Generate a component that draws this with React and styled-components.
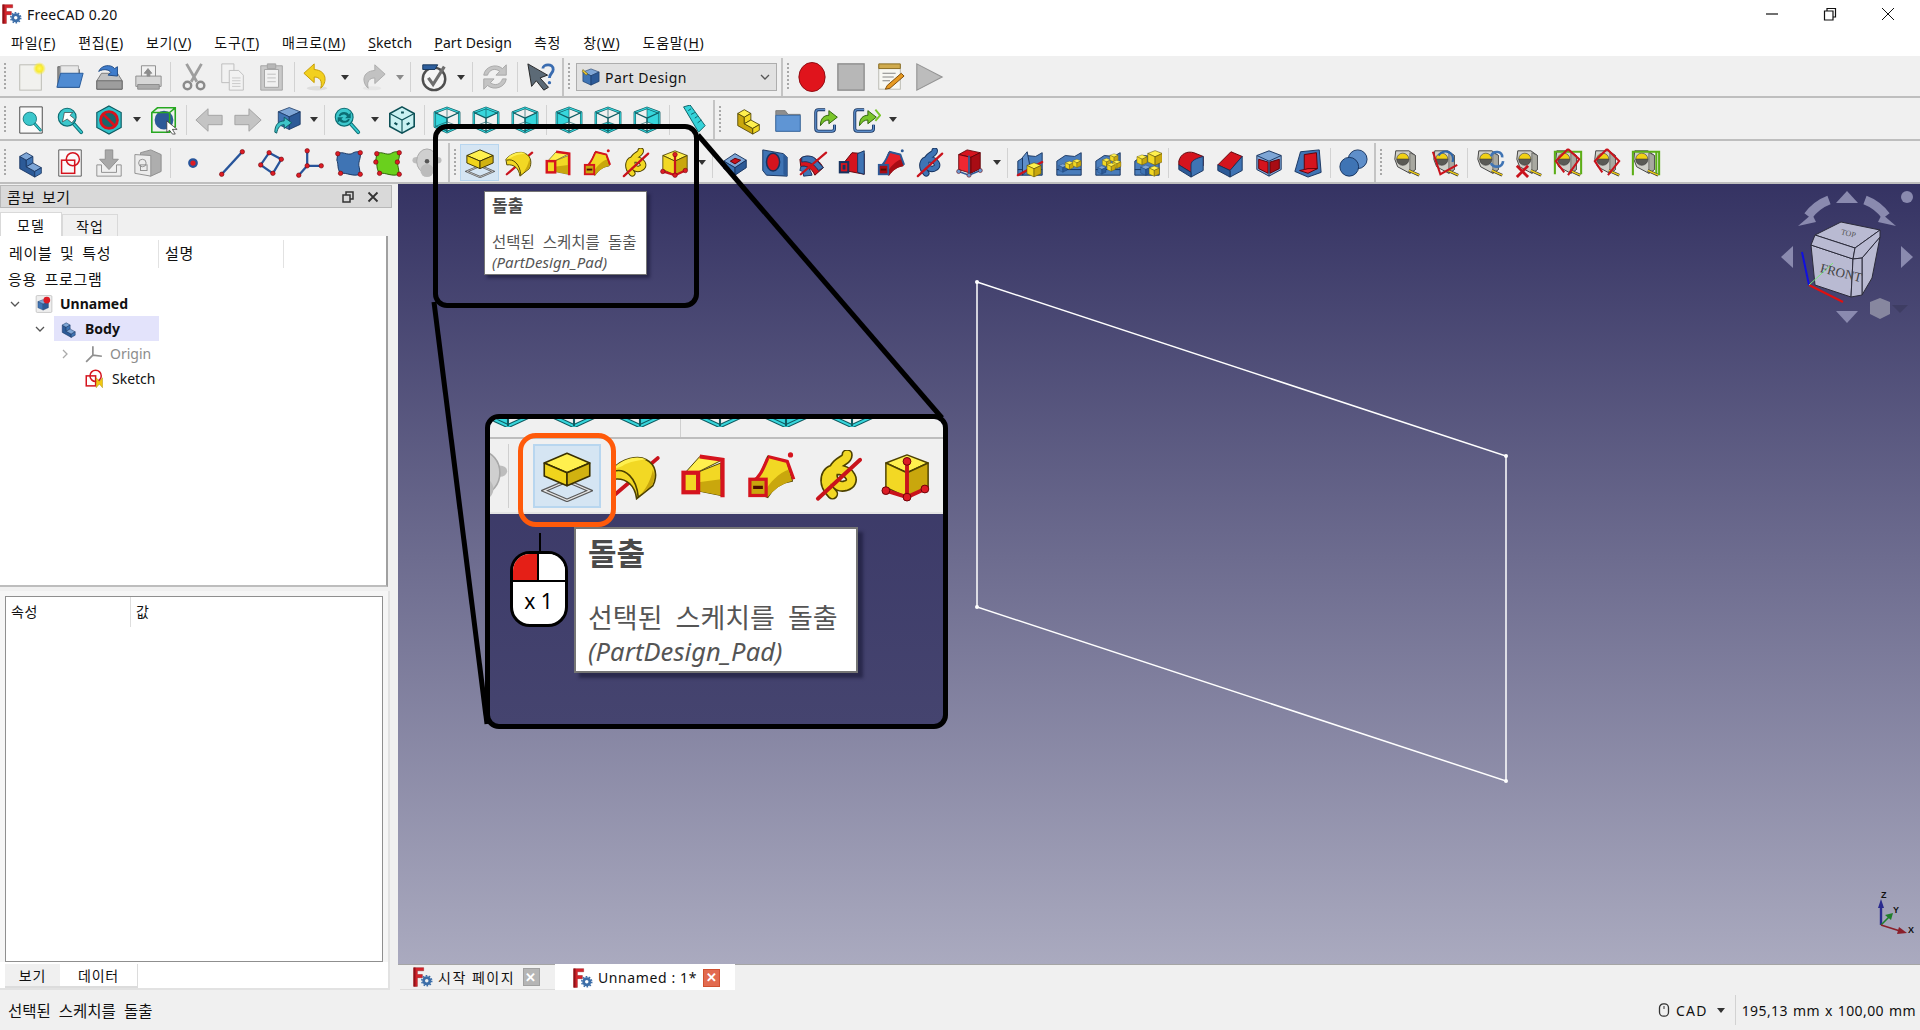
import React from 'react';
import styled, {createGlobalStyle} from 'styled-components';

const FONT = `"Noto Sans", "Noto Sans CJK KR", sans-serif`;

const GlobalStyle = createGlobalStyle`
    html, body {
        margin: 0;
        padding: 0;
        height: 100%;
        overflow: hidden;
        background: #f0f0f0;
    }
    * {
        box-sizing: border-box;
    }
`;

const Page = styled.div`
    position: relative;
    display: flex;
    flex-direction: column;
    width: 1920px;
    height: 1030px;
    overflow: hidden;
    background: #f0f0f0;
    color: #111;
    font-family: ${FONT};
    font-size: 14px;
`;

/* title + menu */
const TitleBar = styled.div`
    display: flex;
    align-items: center;
    flex: none;
    height: 28px;
    padding: 0 3px 0 2px;
    background: #fff;
    font-size: 14px;
    letter-spacing: 0.2px;
`;
const TitleText = styled.span`
    flex: 1;
    margin-left: 5px;
`;
const WinBtn = styled.div`
    display: flex;
    align-items: center;
    justify-content: center;
    width: 58px;
    height: 28px;
`;
const MenuBar = styled.div`
    display: flex;
    align-items: center;
    flex: none;
    height: 28px;
    padding-left: 11px;
    gap: 22px;
    background: #fff;
    font-size: 14px;
`;
const MenuItem = styled.span`
    letter-spacing: ${p => (p.$latin ? 0.1 : 0.75)}px;
    u {
        text-underline-offset: 2px;
    }
`;

/* toolbars */
const ToolRow = styled.div`
    display: flex;
    align-items: center;
    flex: none;
    height: ${p => p.$h || 42}px;
    padding: 2px 0 0 4px;
    background: #f0f0f0;
    border-bottom: 2px solid #bebebe;
`;
const Handle = styled.div`
    flex: none;
    width: 2px;
    height: 28px;
    margin-right: ${p => p.$after || 5.5}px;
    background: repeating-linear-gradient(to bottom, #a8a8a8 0 2px, transparent 2px 4px);
`;
const ToolBreak = styled.div`
    display: flex;
    align-items: center;
    flex: none;
    height: 100%;
    margin-left: 2px;
    padding-left: 4px;
    border-left: 2px solid #c4c4c4;
`;
const ToolBtn = styled.div`
    display: flex;
    align-items: center;
    justify-content: center;
    flex: none;
    width: 39px;
    height: 37px;
    background: ${p => (p.$active ? '#d5e5f3' : 'transparent')};
    border: 1px solid ${p => (p.$active ? '#b8d6ef' : 'transparent')};
`;
const Drop = styled.div`
    flex: none;
    width: 16px;
    height: 5px;
    display: flex;
    justify-content: center;
    &::after {
        content: '';
        border-left: 4px solid transparent;
        border-right: 4px solid transparent;
        border-top: 5px solid ${p => p.$color || '#333'};
    }
`;
const ToolSep = styled.div`
    flex: none;
    width: ${p => p.$w || 5.5}px;
    height: 30px;
    background: linear-gradient(#d2d2d2, #d2d2d2) center / 1px 100% no-repeat;
`;
const WorkbenchCombo = styled.div`
    display: flex;
    align-items: center;
    flex: none;
    width: 201px;
    height: 28px;
    margin-right: 2px;
    padding: 0 6px 0 4px;
    gap: 4px;
    background: #e1e1e1;
    border: 1px solid #adadad;
    letter-spacing: 0.5px;
`;
const ComboLabel = styled.span`
    flex: 1;
`;

/* main area */
const Main = styled.div`
    display: flex;
    flex: 1;
    min-height: 0;
`;
const LeftDock = styled.div`
    display: flex;
    flex-direction: column;
    flex: none;
    width: 398px;
`;
const DockTitle = styled.div`
    display: flex;
    align-items: center;
    flex: none;
    width: 392px;
    height: 23px;
    margin-top: 1px;
    padding: 0 6px;
    background: #d9d9d9;
    border: 1px solid #b8b8b8;
    font-size: 15px;
    letter-spacing: 0.5px;
    word-spacing: 2px;
`;
const DockName = styled.span`
    flex: 1;
`;
const DockBtn = styled.div`
    display: flex;
    align-items: center;
    justify-content: center;
    width: 25px;
`;
const TabStrip = styled.div`
    display: flex;
    align-items: flex-end;
    flex: none;
    height: 24px;
    margin-top: 4px;
`;
const Tab = styled.div`
    display: flex;
    align-items: center;
    justify-content: center;
    width: ${p => p.$w}px;
    height: ${p => (p.$active ? 24 : 22)}px;
    background: ${p => (p.$active ? '#fff' : '#f0f0f0')};
    border: 1px solid #d9d9d9;
    border-bottom: 0;
    letter-spacing: 1px;
`;
const TreePane = styled.div`
    flex: none;
    width: 388px;
    height: 351px;
    padding-top: 4px;
    background: #fff;
    border-right: 2px solid #a0a0a0;
    border-bottom: 2px solid #bdbdbd;
`;
const ColHeads = styled.div`
    display: flex;
    height: 28px;
`;
const ColHead = styled.div`
    width: ${p => p.$w}px;
    padding-left: ${p => p.$pad}px;
    font-size: 15px;
    line-height: 26px;
    border-right: 1px solid #e2e2e2;
    letter-spacing: 0.7px;
    word-spacing: 3px;
`;
const TreeRow = styled.div`
    display: flex;
    align-items: center;
    height: 25px;
    padding-left: ${p => 8 + 25 * (p.$level || 0)}px;
`;
const Chevron = styled.div`
    display: flex;
    align-items: center;
    justify-content: center;
    flex: none;
    width: 14px;
    margin-right: 7px;
`;
const TreeItem = styled.div`
    display: flex;
    align-items: center;
    flex: none;
    width: ${p => 130 - 25 * p.$level}px;
    height: 100%;
    padding-left: 6px;
    gap: 7px;
    background: ${p => (p.$selected ? '#e3e3fb' : 'transparent')};
    font-weight: ${p => (p.$bold ? 700 : 400)};
    color: ${p => (p.$muted ? '#8c8c8c' : '#111')};
`;
const AppLabel = styled.div`
    height: 23px;
    padding-left: 8px;
    font-size: 15px;
    line-height: 23px;
    letter-spacing: 0.7px;
    word-spacing: 3px;
`;
const PropOuter = styled.div`
    display: flex;
    flex-direction: column;
    flex: 1;
    width: 390px;
    margin-top: 4px;
    padding: 5px 0 0 5px;
    background: #f6f6f6;
    border-right: 2px solid #e2e2e2;
    border-bottom: 2px solid #e2e2e2;
`;
const PropBox = styled.div`
    flex: none;
    width: 378px;
    height: 366px;
    background: #fff;
    border: 1px solid #8f8f8f;
`;
const PropHead = styled.div`
    display: flex;
    height: 30px;
`;
const PropCol = styled.div`
    width: ${p => p.$w}px;
    padding-left: 5px;
    line-height: 29px;
    letter-spacing: 0.6px;
    border-right: ${p => (p.$line ? '1px solid #dedede' : '0')};
`;
const BottomTabs = styled.div`
    display: flex;
    flex: 1;
    margin-left: -5px;
    padding: 2px 0 0 5px;
    background: #fff;
`;
const BottomTab = styled.div`
    display: flex;
    align-items: center;
    justify-content: center;
    width: ${p => p.$w}px;
    height: 24px;
    background: ${p => (p.$active ? '#fff' : '#f0f0f0')};
    border-bottom: 2px solid #dcdcdc;
    border-right: ${p => (p.$active ? '1px solid #dcdcdc' : '0')};
    letter-spacing: 0.8px;
`;

const RightArea = styled.div`
    display: flex;
    flex-direction: column;
    flex: 1;
    min-width: 0;
`;
const Canvas = styled.div`
    flex: none;
    height: 780px;
    background: linear-gradient(to bottom, #353363, #aaaabf);
`;
const Scene = styled.svg`
    display: block;
    width: 1522px;
    height: 780px;
`;
const DocTabs = styled.div`
    display: flex;
    align-items: flex-start;
    flex: 1;
    padding-left: 2px;
    background: #f0f0f0;
    border-top: 1px solid #a5a5a5;
`;
const DocTab = styled.div`
    display: flex;
    align-items: center;
    width: ${p => p.$w}px;
    height: ${p => (p.$active ? 29 : 26)}px;
    margin-top: ${p => (p.$active ? -1 : 0)}px;
    padding-left: ${p => (p.$active ? 18 : 13)}px;
    gap: 5px;
    background: ${p => (p.$active ? '#fff' : '#f0f0f0')};
    border-bottom: 2px solid #dcdcdc;
    letter-spacing: ${p => (p.$active ? 0.6 : 1.5)}px;
`;
const CloseBox = styled.div`
    display: flex;
    align-items: center;
    justify-content: center;
    width: 17px;
    height: 18px;
    margin-left: ${p => p.$ml}px;
    background: ${p => (p.$hot ? '#e26a4f' : '#b5b5b5')};
    border: 1px solid ${p => (p.$hot ? '#d05030' : '#a0a0a0')};
    color: #fff;
    font-size: 13px;
    font-weight: 700;
    line-height: 1;
`;

/* status */
const StatusBar = styled.div`
    display: flex;
    align-items: center;
    flex: none;
    height: 40px;
    padding-left: 8px;
    background: #f0f0f0;
    word-spacing: 4px;
    font-size: 15.5px;
`;
const StatusMsg = styled.span`
    flex: 1;
`;
const StatusCell = styled.div`
    display: flex;
    align-items: center;
    height: 30px;
    gap: 5px;
    font-size: 14px;
    letter-spacing: 1.2px;
    word-spacing: 1px;
`;
const StatusData = styled(StatusCell)`
    margin-left: 6px;
    padding: 0 4px 0 6px;
    border-left: 1px solid #d2d2d2;
    letter-spacing: 0.4px;
`;

/* callouts */
const ConnectLines = styled.svg`
    position: absolute;
    left: 0;
    top: 0;
    width: 1920px;
    height: 1030px;
    pointer-events: none;
`;
const SmallCallout = styled.div`
    position: absolute;
    left: 433px;
    top: 124px;
    width: 266px;
    height: 184px;
    border: 5px solid #000;
    border-radius: 14px;
`;
const BigCallout = styled.div`
    position: absolute;
    left: 485px;
    top: 414px;
    width: 463px;
    height: 315px;
    overflow: hidden;
    background: linear-gradient(to bottom, #393766, #45446f);
    border: 5px solid #000;
    border-radius: 14px;
`;
const MagStrip = styled.div`
    display: flex;
    height: 20px;
    overflow: hidden;
    background: #f0f0f0;
    border-bottom: 2px solid #bdbdbd;
`;
const MagCrop = styled.div`
    display: flex;
    align-items: flex-end;
    justify-content: center;
    flex: none;
    width: 66px;
    height: 8px;
    margin-left: ${p => (p.$first ? -15 : 0)}px;
    overflow: hidden;
    svg {
        margin-bottom: -4px;
    }
`;
const MagGap = styled.div`
    flex: none;
    width: 14px;
    background: linear-gradient(#cfcfcf, #cfcfcf) center / 1px 100% no-repeat;
`;
const MagRow = styled.div`
    display: flex;
    align-items: center;
    height: 75px;
    background: #f0f0f0;
    border-bottom: 2px solid #e4e4e4;
`;
const MagSide = styled.div`
    display: flex;
    justify-content: flex-end;
    flex: none;
    width: 19px;
    height: 64px;
    margin-right: 24px;
    padding-top: 6px;
    overflow: hidden;
    border-right: 1px solid #cfcfcf;
`;
const MagBtn = styled.div`
    display: flex;
    align-items: center;
    justify-content: center;
    flex: none;
    width: 68px;
    height: 64px;
    background: ${p => (p.$active ? '#d5e5f3' : 'transparent')};
    border: 2px solid ${p => (p.$active ? '#b8d6ef' : 'transparent')};
`;
const OrangeRing = styled.div`
    position: absolute;
    left: 28px;
    top: 14px;
    width: 98px;
    height: 94px;
    border: 5px solid #ff5a0a;
    border-radius: 18px;
`;
const MouseWire = styled.div`
    position: absolute;
    left: 49px;
    top: 114px;
    width: 2px;
    height: 20px;
    background: #000;
`;
const MouseBody = styled.div`
    position: absolute;
    left: 20px;
    top: 132px;
    width: 58px;
    height: 76px;
    overflow: hidden;
    background: #fff;
    border: 3px solid #000;
    border-radius: 20px;
`;
const MouseKeys = styled.div`
    display: grid;
    grid-template-columns: 1fr 1fr;
    height: 28px;
    border-bottom: 2px solid #000;
`;
const MouseKey = styled.div`
    background: ${p => (p.$on ? '#e51f17' : '#fff')};
    border-right: ${p => (p.$on ? '2px solid #000' : '0')};
`;
const MouseLabel = styled.div`
    text-align: center;
    font-size: 21px;
    line-height: 38px;
    letter-spacing: 1px;
    word-spacing: -2px;
    color: #000;
`;
const Tip = styled.div`
    position: absolute;
    left: ${p => p.$x}px;
    top: ${p => p.$y}px;
    width: ${p => (p.$big ? 284 : 163)}px;
    height: ${p => (p.$big ? 146 : 84)}px;
    padding: ${p => (p.$big ? '5px 0 0 12px' : '2px 0 0 7px')};
    background: #fff;
    border: ${p => (p.$big ? 2 : 1)}px solid #757575;
    box-shadow: ${p => (p.$big ? 5 : 3)}px ${p => (p.$big ? 5 : 3)}px 3px rgba(20, 20, 50, 0.55);
    color: #555;
    white-space: nowrap;
`;
const TipTitle = styled.div`
    font-size: ${p => (p.$big ? 31 : 17)}px;
    font-weight: 700;
    line-height: ${p => (p.$big ? 38 : 24)}px;
    color: #4a4a4a;
`;
const TipDesc = styled.div`
    margin-top: ${p => (p.$big ? 29 : 14)}px;
    font-size: ${p => (p.$big ? 27 : 15.5)}px;
    line-height: ${p => (p.$big ? 34 : 20)}px;
    word-spacing: ${p => (p.$big ? 6 : 4)}px;
`;
const TipCode = styled.div`
    font-size: ${p => (p.$big ? 25.5 : 15)}px;
    font-style: italic;
    line-height: ${p => (p.$big ? 32 : 20)}px;
    letter-spacing: ${p => (p.$big ? 0.1 : 0.1)}px;
`;

/* icons */
const Glyph = styled.svg`
    display: block;
    flex: none;
    width: ${p => p.$s}px;
    height: ${p => p.$s}px;
`;

const BL = ['#7ea6d6', '#3f74b4', '#2c5a97', '#16335f'];
const YL = ['#fff04e', '#f2d824', '#c9a70d', '#4d4100'];
const RD = ['#ff4a4a', '#e3202a', '#a80c14', '#5e0006'];

const stair = c => (
    <g stroke={c[3]} strokeWidth='.9' strokeLinejoin='round'>
        <polygon points='4,22 4,9 11,13 11,20 20,25 20,31' fill={c[2]}/>
        <polygon points='4,9 11,5 18,9 11,13' fill={c[0]}/>
        <polygon points='11,13 18,9 18,16 11,20' fill={c[1]}/>
        <polygon points='11,20 18,16 27,21 20,25' fill={c[0]}/>
        <polygon points='20,25 27,21 27,27 20,31' fill={c[1]}/>
    </g>
);

const cube = (c, y = 0) => (
    <g stroke={c[3]} strokeWidth='.9' strokeLinejoin='round' transform={`translate(0 ${y})`}>
        <polygon points='16,3 29,8 16,14 3,8' fill={c[0]}/>
        <polygon points='3,8 16,14 16,29 3,23' fill={c[1]}/>
        <polygon points='29,8 16,14 16,29 29,23' fill={c[2]}/>
    </g>
);

const wire = face => {
    const faces = {
        front: '3,8 16,14 16,29 3,23',
        top: '16,3 29,8 16,14 3,8',
        right: '29,8 16,14 16,29 29,23',
        rear: '3,8 16,3 16,18 3,23',
        bottom: '3,23 16,18 29,23 16,29',
        left: '16,3 29,8 29,23 16,18',
    };
    return (
        <g strokeLinejoin='round'>
            <polygon points={faces[face]} fill='#37d6dc'/>
            <polygon points='16,3 29,8 29,23 16,29 3,23 3,8' fill='none' stroke='#0f5c62' strokeWidth='2.6'/>
            <polygon points='16,3 29,8 29,23 16,29 3,23 3,8' fill='none' stroke='#37d6dc' strokeWidth='1.3'/>
            <path d='M3 8 16 14 29 8M16 14V29' fill='none' stroke='#0f5c62' strokeWidth='1.3'/>
            <path d='M16 3V18M3 23 16 18 29 23' fill='none' stroke='#0f5c62' strokeWidth='.7'/>
        </g>
    );
};

const lens = (
    <g>
        <line x1='19' y1='19' x2='28' y2='29' stroke='#0b6d73' strokeWidth='4' strokeLinecap='round'/>
        <line x1='19' y1='19' x2='28' y2='29' stroke='#35c8cc' strokeWidth='2' strokeLinecap='round'/>
        <circle cx='13' cy='13' r='9.5' fill='#3cc7cc' stroke='#0b6d73' strokeWidth='1.2'/>
    </g>
);

const tape = extra => (
    <g>
        <path d='M4 3 18 3 25 8 25 23 19 27 6 20 3 12Z' fill='#cfcfc8' stroke='#3d3d3d'/>
        <path d='M19 27 25 23V8L19 5Z' fill='#a8a8a0' stroke='#3d3d3d' strokeWidth='.6'/>
        <path d='M5 12A6.5 6.5 0 0 1 18 12Z' fill='#f0d014' stroke='#333' strokeWidth='.6'/>
        <path d='M5 12A6.5 6.5 0 0 0 18 12Z' fill='#5a5a55' stroke='#333' strokeWidth='.6'/>
        <path d='M18 24 29 29' stroke='#333' strokeWidth='3'/>
        <path d='M18 24 29 29' stroke='#eccb18' strokeWidth='1.6'/>
        {extra}
    </g>
);

const redLine = (x1, y1, x2, y2, w = 2.4) => <line x1={x1} y1={y1} x2={x2} y2={y2} stroke='#c9131c' strokeWidth={w} strokeLinecap='round'/>;
const pin = (x, y, r = 2.4, f = '#dc1c25') => <circle cx={x} cy={y} r={r} fill={f} stroke='#6d0208' strokeWidth='.6'/>;

const revolve = c => (
    <g>
        {redLine(3, 28, 30, 5)}
        <path d='M2 12C8 5 18 3 23 6 29 9 30 16 27 22L17 30C16 22 11 17 3 18Z' fill={c[1]} stroke={c[3]}/>
        <path d='M2 12C8 5 18 3 23 6 20 6 12 7 8 10Z' fill={c[0]}/>
        <path d='M3 13C10 11 17 17 18 29' fill='none' stroke={c[3]}/>
        <path d='M20 27 27 21C28 18 28 15 27 12 26 18 23 23 20 27Z' fill={c[2]}/>
    </g>
);
const loft = (c, e) => (
    <g>
        <polygon points='12,14 27,8 27,28 12,25' fill={c[1]} stroke={c[3]} strokeWidth='.6'/>
        <polygon points='12,20 27,18 27,28 12,25' fill={c[2]}/>
        <polygon points='5,14 14,4 28,6 12,14' fill={c[0]} stroke={c[3]} strokeWidth='.6'/>
        <path d='M14 4 28 6V29' fill='none' stroke={e} strokeWidth='2.6'/>
        <rect x='4' y='14' width='9' height='12' fill={c[1]} stroke={e} strokeWidth='2.6'/>
    </g>
);
const pipe = (c, e) => (
    <g>
        <path d='M5 20C10 16 12 9 14 4L26 7 29 19C22 20 17 24 14 29L4 25Z' fill={c[1]} stroke={c[3]}/>
        <path d='M14 29C18 24 22 21 29 19L27 12C21 14 15 20 12 26Z' fill={c[2]}/>
        <path d='M14 4 26 7 30 18M14 5C11 12 9 17 5 19' fill='none' stroke={e} strokeWidth='2'/>
        <rect x='3' y='18' width='10' height='10' fill={c[2]} stroke={e} strokeWidth='2'/>
        <rect x='5' y='22' width='6' height='2' fill='#4d1000'/>
        <circle cx='28' cy='3' r='1.6' fill={e}/>
    </g>
);
const helix = c => (
    <g fill='none' strokeLinecap='round'>
        <path d='M12 27C5 20 8 12 14 12 23 12 27 20 20 22 14 24 8 16 15 9 18 6 21 6 21 3' stroke={c[3]} strokeWidth='7'/>
        <path d='M12 27C5 20 8 12 14 12 23 12 27 20 20 22 14 24 8 16 15 9 18 6 21 6 21 3' stroke={c[1]} strokeWidth='5'/>
        {redLine(3, 30, 29, 6)}
    </g>
);
const prim = c => (
    <g>
        {cube(c)}
        {redLine(16, 7, 16, 28)}
        {redLine(3, 25, 16, 29)}
        {redLine(16, 29, 27, 24)}
        {pin(16, 7)}{pin(3, 25)}{pin(16, 29)}{pin(27, 24)}
    </g>
);
const block = (
    <g stroke='#16335f' strokeLinejoin='round'>
        <polygon points='4,14 16,6 28,13 16,21' fill='#7ea6d6'/>
        <polygon points='4,14 16,21 16,29 4,22' fill='#3f74b4'/>
        <polygon points='28,13 16,21 16,29 28,21' fill='#2c5a97'/>
    </g>
);
const pattern = cubes => (
    <g>
        <polygon points='3,29 3,14 12,8 22,9 29,5 29,29' fill='#4a7dbb' stroke='#16335f'/>
        <path d='M3 23H29' stroke='#16335f'/>
        {cubes}
    </g>
);
const mini = (x, y, c = YL, s = .34) => <g transform={`translate(${x} ${y}) scale(${s})`}>{cube(c)}</g>;

const link = two => (
    <g>
        <path d='M14 5H7Q4 5 4 8V25Q4 28 7 28H21Q24 28 24 25V21' fill='none' stroke='#16335f' strokeWidth='3.2'/>
        <path d='M14 5H7Q4 5 4 8V25Q4 28 7 28H21Q24 28 24 25V21' fill='none' stroke='#5b8cc8' strokeWidth='1.4'/>
        <path d='M9 22C9 14 13 11 18 11V6L27 13 18 20V16C14 16 12 18 9 22Z' fill='#7ac62a' stroke='#2b5e06'/>
        {two && <path d='M26 5 31 11 26 17' fill='none' stroke='#7ac62a' strokeWidth='2'/>}
    </g>
);

const blob = 'M4 6C9 3 14 8 19 6 22 4 26 3 28 5 29 12 25 15 27 21L28 28C20 31 14 26 7 27 3 22 5 17 3 13Z';

const logo = (
    <g>
        <path d='M1 1H17V6H7V12H15V17H7V31H1Z' fill='#d6232a' stroke='#8d1015' strokeWidth='.7'/>
        <path d='M1 1H4V31H1Z' fill='#8e1218'/>
        <circle cx='22' cy='22' r='5' fill='none' stroke='#3c6ea8' strokeWidth='4.4'/>
        <circle cx='22' cy='22' r='8' fill='none' stroke='#3c6ea8' strokeWidth='2.4' strokeDasharray='2.6 2.4'/>
    </g>
);

const icons = {
    logo,
    new: (
        <g>
            <defs>
                <radialGradient id='glow'>
                    <stop offset='0' stopColor='#fff75a'/>
                    <stop offset='.5' stopColor='#f8ea30'/>
                    <stop offset='1' stopColor='#f8ea30' stopOpacity='0'/>
                </radialGradient>
            </defs>
            <rect x='4' y='3' width='23' height='27' fill='#f1f1ee' stroke='#b9b9b2'/>
            <circle cx='25' cy='7' r='7' fill='url(#glow)'/>
        </g>
    ),
    open: (
        <g>
            <path d='M3 27V5H12L14 8H26V27Z' fill='#8f8f8f' stroke='#666'/>
            <path d='M6 4H25V14H6Z' fill='#e8e8e8' stroke='#aaa'/>
            <path d='M2 27 6 12H30L26 27Z' fill='#4f8bd2' stroke='#255a9c'/>
        </g>
    ),
    save: (
        <g>
            <path d='M3 20 8 12H25L30 20V29H3Z' fill='#c2c2c2' stroke='#777'/>
            <path d='M3 20H30V29H3Z' fill='#9d9d9d' stroke='#666'/>
            <path d='M5 10C8 3 18 2 22 7L25 5 25 15 15 14 18 11C16 8 10 7 5 10Z' fill='#3f7ccb' stroke='#1d4a85'/>
        </g>
    ),
    print: (
        <g stroke='#8c8c8c'>
            <path d='M9 4H24V16H9Z' fill='#f1f1f1'/>
            <path d='M3 15H30V26H3Z' fill='#d6d6d6'/>
            <path d='M5 24H28V29H5Z' fill='#ababab'/>
            <path d='M16 7 20 12H18V15H15V12H12Z' fill='#8c8c8c'/>
        </g>
    ),
    cut: (
        <g fill='none' stroke='#9e9e9e'>
            <path d='M8 2 19 21M24 2 13 21' strokeWidth='3'/>
            <circle cx='9' cy='25' r='4' strokeWidth='2.6' stroke='#8b8b8b'/>
            <circle cx='23' cy='25' r='4' strokeWidth='2.6' stroke='#8b8b8b'/>
        </g>
    ),
    copy: (
        <g stroke='#bdbdbd' fill='#f2f2f2'>
            <path d='M4 2H17V22H4Z'/>
            <path d='M12 9H22L27 14V30H12Z'/>
            <path d='M15 17H24M15 20H24M15 23H24M15 26H24' stroke='#c8c8c8'/>
        </g>
    ),
    paste: (
        <g stroke='#a3a3a3'>
            <path d='M4 4H27V30H4Z' fill='#c9c9c9'/>
            <path d='M8 8H23V27H8Z' fill='#f1f1f1'/>
            <path d='M11 2H20V7H11Z' fill='#b7b7b7'/>
            <path d='M11 13H20M11 17H20M11 21H20' stroke='#bdbdbd'/>
        </g>
    ),
    undo: (
        <g>
            <ellipse cx='16' cy='28' rx='11' ry='2.4' fill='#ddd'/>
            <path d='M13 2 2 12 13 22V16C19 16 22 20 20 28 27 22 27 9 13 8Z' fill='#f2d01f' stroke='#c49a00'/>
        </g>
    ),
    redo: (
        <g>
            <ellipse cx='16' cy='28' rx='10' ry='2.2' fill='#e6e6e6'/>
            <path d='M19 3 30 13 19 23V17C13 17 10 21 12 28 5 22 5 10 19 9Z' fill='#c2c2c2' stroke='#ababab'/>
        </g>
    ),
    check: (
        <g>
            <circle cx='16' cy='18' r='12' fill='#f5f5f5' stroke='#4e4e4e' strokeWidth='2.6'/>
            <path d='M10 17 15 24 27 5' fill='none' stroke='#6e6e6e' strokeWidth='3.4'/>
            <path d='M4 3H20L17 8H4Z' fill='#2e5f9e' stroke='#143358'/>
        </g>
    ),
    refresh: (
        <g fill='#c4c4c4' stroke='#a6a6a6'>
            <path d='M4 14C5 5 17 1 24 7L28 3V14H17L21 10C16 6 10 8 8 14Z'/>
            <path d='M28 18C27 27 15 31 8 25L4 29V18H15L11 22C16 26 22 24 24 18Z'/>
        </g>
    ),
    help: (
        <g>
            <path d='M2 2 23 14 15 17 24 27 19 30 11 20 6 26Z' fill='#5c6a76' stroke='#222'/>
            <path d='M18 7C18 2 29 1 29 8 29 12 25 12 25 17' fill='none' stroke='#3a6cb0' strokeWidth='3'/>
            <circle cx='25' cy='22' r='1.8' fill='#3a6cb0'/>
        </g>
    ),
    wbench: (
        <g>
            {cube(BL)}
            <path d='M3 4 11 11 8 13 2 7Z' fill='#e8c73a' stroke='#544600' strokeWidth='.8'/>
        </g>
    ),
    doc: (
        <g>
            <rect x='2' y='1' width='28' height='30' rx='2' fill='#eee' stroke='#aaa'/>
            <g transform='translate(3 6) scale(.72)'>{cube(BL)}</g>
            <circle cx='21' cy='9' r='6' fill='#dc1c25'/>
        </g>
    ),
    record: <ellipse cx='16' cy='16' rx='14' ry='15.5' fill='#e0141c' stroke='#8d0a10'/>,
    stop: <rect x='2' y='2' width='28' height='28' fill='#b7b7b7' stroke='#8a8a8a' strokeWidth='1.4'/>,
    edit: (
        <g>
            <rect x='4' y='4' width='23' height='25' fill='#f7f7f2' stroke='#b8b8b0'/>
            <path d='M4 2H27V7H4Z' fill='#d0ab4e' stroke='#85691e'/>
            <path d='M8 12H22M8 16H20M8 20H16' stroke='#7e7e7e'/>
            <path d='M13 25 28 12 31 15 16 28 11 29Z' fill='#e79a22' stroke='#7b4a06'/>
        </g>
    ),
    play: <polygon points='3,2 30,16 3,30' fill='#bcbcbc' stroke='#949494' strokeWidth='1.2'/>,
    fitall: (
        <g>
            <path d='M4 2H28V30H4Z' fill='#fafafa' stroke='#444'/>
            <g transform='translate(5 5) scale(.75)'>{lens}</g>
        </g>
    ),
    fitsel: (
        <g>
            {lens}
            <path d='M8 18 10 8 19 8 16 11 21 15 18 19 13 15Z' fill='#fff' stroke='#333' strokeWidth='.7'/>
        </g>
    ),
    drawstyle: (
        <g>
            <polygon points='16,1 29,8 29,24 16,31 3,24 3,8' fill='#2fc0c8' stroke='#0b5a60' strokeWidth='1.2'/>
            <circle cx='16' cy='16' r='9' fill='#19666c' stroke='#d9121d' strokeWidth='3'/>
            <line x1='10' y1='10' x2='22' y2='22' stroke='#d9121d' strokeWidth='3'/>
        </g>
    ),
    bound: (
        <g>
            <circle cx='16' cy='16' r='10' fill='#2c5a97'/>
            <path d='M3 8 9 3H28V23L22 29H3Z M3 8H22V29M22 8 28 3' fill='none' stroke='#27a821' strokeWidth='1.7'/>
            <path d='M19 17 30 26 25 26 28 31 25 31 22 27 19 29Z' fill='#fff' stroke='#333' strokeWidth='.8'/>
        </g>
    ),
    back: <polygon points='2,16 15,4 15,11 30,11 30,21 15,21 15,28' fill='#c4c4c4' stroke='#a2a2a2'/>,
    forward: <polygon points='30,16 17,4 17,11 2,11 2,21 17,21 17,28' fill='#c4c4c4' stroke='#a2a2a2'/>,
    nav: (
        <g>
            <g transform='translate(4 0) scale(.9)'>{cube(BL)}</g>
            <path d='M3 29C3 20 8 17 13 17V13L21 19 13 25V21C9 21 6 24 5 30Z' fill='#3ec4c8' stroke='#0b5a60'/>
        </g>
    ),
    sync: (
        <g>
            {lens}
            <path d='M7 12C8 7 15 6 18 10L20 8V14H14L16 12C14 9 10 10 9 12ZM19 15C18 20 11 20 8 17L6 19V13H12L10 15C12 18 16 17 17 15Z' fill='#0b6d73'/>
        </g>
    ),
    iso: (
        <g>
            <polygon points='16,2 29,9 29,23 16,30 3,23 3,9' fill='#c9f1f2' stroke='#0b4f55' strokeWidth='1.7'/>
            <path d='M3 9 16 16 29 9M16 16V30' fill='none' stroke='#0b4f55' strokeWidth='1.2'/>
            <path d='M8 19 11 21M21 21 24 19M15 8H18' stroke='#0b4f55' strokeWidth='2.2'/>
        </g>
    ),
    vfront: wire('front'),
    vtop: wire('top'),
    vright: wire('right'),
    vrear: wire('rear'),
    vbottom: wire('bottom'),
    vleft: wire('left'),
    ruler: (
        <g>
            <polygon points='7,2 14,0 30,22 23,29' fill='#34d3d9' stroke='#0d5e64'/>
            <path d='M12 6 15 4M15 10 19 8M19 14 22 12M22 19 26 16' stroke='#0d5e64'/>
        </g>
    ),
    part: stair(YL),
    folder: (
        <g>
            <path d='M3 6H13L16 10H29V28H3Z' fill='#8e8e8e' stroke='#777'/>
            <path d='M3 11H29V28H3Z' fill='#5f95d4' stroke='#3a6eab'/>
        </g>
    ),
    link: link(false),
    link2: link(true),
    body: stair(BL),
    sketch: (
        <g>
            <path d='M4 2H28V30H4Z' fill='#fafafa' stroke='#555'/>
            <rect x='7' y='13' width='14' height='14' fill='none' stroke='#d5141e' strokeWidth='1.6'/>
            <circle cx='19' cy='12' r='7' fill='none' stroke='#d5141e' strokeWidth='1.6'/>
        </g>
    ),
    attach: (
        <g stroke='#8e8e8e'>
            <path d='M3 18H8V26H24V18H29V30H3Z' fill='#efefef'/>
            <path d='M12 2H20V12H26L16 23 6 12H12Z' fill='#a8a8a8'/>
        </g>
    ),
    clone: (
        <g stroke='#8e8e8e'>
            <polygon points='8,5 19,2 30,7 30,25 19,30 8,26' fill='#aeaeae'/>
            <polygon points='2,7 19,8 19,30 2,27' fill='#ececec'/>
            <circle cx='10' cy='16' r='4' fill='none'/>
            <rect x='8' y='18' width='7' height='6' fill='none'/>
        </g>
    ),
    point: <circle cx='16' cy='16' r='4' fill='#dc1c25' stroke='#27549a' strokeWidth='2.4'/>,
    line: (
        <g>
            <line x1='5' y1='28' x2='27' y2='4' stroke='#27549a' strokeWidth='2.6'/>
            {pin(5, 28)}{pin(27, 4)}
        </g>
    ),
    plane: (
        <g>
            <polygon points='14,5 27,12 18,27 5,18' fill='none' stroke='#27549a' strokeWidth='2.4'/>
            {pin(14, 5)}{pin(27, 12)}{pin(18, 27)}{pin(5, 18)}
        </g>
    ),
    lcs: (
        <g>
            <path d='M13 3V19M13 19 28 19M13 19 4 29' stroke='#27549a' strokeWidth='2.4' fill='none'/>
            {pin(13, 3)}{pin(13, 19)}{pin(28, 19)}{pin(4, 29)}
        </g>
    ),
    binder: (
        <g>
            <path d={blob} fill='#3f74b4' stroke='#16335f'/>
            {pin(4, 6)}{pin(28, 5)}{pin(28, 28)}{pin(7, 27)}
        </g>
    ),
    subshape: (
        <g>
            <path d={blob} fill='#6ad01d' stroke='#2b5e06'/>
            {pin(4, 6)}{pin(28, 5)}{pin(26, 15)}{pin(28, 28)}{pin(7, 27)}{pin(3, 15)}
        </g>
    ),
    sheep: (
        <g>
            <ellipse cx='5' cy='13' rx='4.5' ry='3.5' fill='#bdbdbd'/>
            <ellipse cx='27' cy='13' rx='4.5' ry='3.5' fill='#bdbdbd'/>
            <ellipse cx='16' cy='14' rx='11' ry='13' fill='#cfcfcf' stroke='#a8a8a8'/>
            <ellipse cx='16' cy='24' rx='7' ry='7' fill='#bcbcbc'/>
            <circle cx='16' cy='14' r='2.4' fill='#555'/>
        </g>
    ),
    pad: (
        <g>
            <polygon points='16,19 30,25 16,31 2,25' fill='none' stroke='#5a5a5a' strokeWidth='2.2'/>
            <polygon points='16,19 30,25 16,31 2,25' fill='none' stroke='#e4e4e4' strokeWidth='.7'/>
            <g strokeLinejoin='round' stroke='#3a3000'>
                <polygon points='16,2 30,8 16,14 2,8' fill='#fff04e'/>
                <polygon points='2,8 16,14 16,22 2,16' fill='#f0d41c'/>
                <polygon points='30,8 16,14 16,22 30,16' fill='#d1b210'/>
            </g>
        </g>
    ),
    revolve: revolve(YL),
    loft: loft(YL, '#d5141e'),
    pipe: pipe(YL, '#d5141e'),
    helix: helix(YL),
    box: prim(YL),
    pocket: (
        <g>
            {block}
            <polygon points='11,14 16,11 22,13 16,17' fill='#c9121b' stroke='#5e0006'/>
        </g>
    ),
    hole: (
        <g>
            <polygon points='4,2 26,6 30,10 30,30 8,29 4,24' fill='#3f74b4' stroke='#16335f'/>
            <polygon points='26,6 30,10 30,30 26,28' fill='#2c5a97'/>
            <ellipse cx='15' cy='15' rx='7' ry='9.5' fill='#d5141e' stroke='#16335f' strokeWidth='1.6'/>
        </g>
    ),
    groove: (
        <g>
            <path d='M2 12C8 6 20 8 27 21L18 29C15 22 9 18 3 20Z' fill='#d5141e' stroke='#5e0006'/>
            <path d='M3 20C8 18 13 21 15 29L6 30C6 26 4 24 2 24Z' fill='#3f74b4' stroke='#16335f'/>
            <path d='M4 10C8 8 15 8 18 11L27 21 22 24C15 14 8 14 4 15Z' fill='#3f74b4' stroke='#16335f'/>
            {redLine(3, 28, 30, 5)}
        </g>
    ),
    sloft: (
        <g>
            <polygon points='8,15 16,5 29,6 29,28 8,24' fill='#d5141e' stroke='#5e0006'/>
            <polygon points='22,6 29,3 29,28 22,26' fill='#3f74b4' stroke='#16335f'/>
            <rect x='3' y='15' width='9' height='11' fill='#d5141e' stroke='#16335f' strokeWidth='2.2'/>
            <rect x='6' y='18' width='3' height='5' fill='#16335f'/>
        </g>
    ),
    spipe: pipe(RD, '#2c5a97'),
    shelix: helix(BL),
    sbox: (
        <g>
            <g stroke='#5e0006' strokeWidth='.9'>
                <polygon points='5,7 14,2 28,5 18,10' fill='#d5141e'/>
                <polygon points='5,7 18,10 18,27 5,23' fill='#ef2731'/>
                <polygon points='28,5 18,10 18,27 28,22' fill='#a80c14'/>
            </g>
            <path d='M5 25 16 29 28 24M16 29V8' fill='none' stroke='#2c5a97' strokeWidth='1.8'/>
            {pin(5, 25, 2.2, '#6a9ad2')}{pin(16, 29, 2.2, '#6a9ad2')}{pin(28, 24, 2.2, '#6a9ad2')}
        </g>
    ),
    mirror: pattern(
        <g>
            <path d='M8 29V10L13 4 16 20Z' fill='#5f8fca' stroke='#16335f'/>
            {redLine(3, 29, 29, 15)}
            <g transform='translate(11 14) scale(.58)'>{cube(YL)}</g>
        </g>
    ),
    linear: pattern(<g>{mini(4, 16, BL)}{mini(11, 13)}{mini(19, 11)}</g>),
    polar: pattern(<g>{mini(4, 18, BL)}{mini(9, 10)}{mini(17, 5)}{mini(20, 12)}{mini(14, 15)}</g>),
    multi: pattern(<g>{mini(8, 17, BL, .42)}{mini(4, 6, YL, .42)}{mini(15, 1, YL, .6)}{mini(17, 18, YL, .42)}</g>),
    fillet: (
        <g>
            <path d='M3 14C5 6 12 3 19 5L29 9V19L16 26 3 18Z' fill='#d5141e' stroke='#5e0006'/>
            <path d='M16 26V18C16 13 22 11 29 9V24L16 31Z' fill='#3f74b4' stroke='#16335f'/>
            <path d='M3 18 16 26V31L3 23Z' fill='#2c5a97' stroke='#16335f'/>
        </g>
    ),
    chamfer: (
        <g>
            <polygon points='3,18 17,4 29,9 16,24' fill='#d5141e' stroke='#5e0006'/>
            <polygon points='16,24 29,9 29,24 16,31' fill='#3f74b4' stroke='#16335f'/>
            <polygon points='3,18 16,24 16,31 3,24' fill='#2c5a97' stroke='#16335f'/>
        </g>
    ),
    draft: (
        <g>
            <polygon points='16,3 29,8 29,23 16,30 3,23 3,8' fill='#7ea6d6' stroke='#16335f'/>
            <polygon points='5,12 15,15 15,27 5,22' fill='#d5141e' stroke='#5e0006'/>
            <polygon points='27,12 17,15 17,27 27,22' fill='#a80c14' stroke='#5e0006'/>
            <path d='M3 8 16 14 29 8M16 14V30' fill='none' stroke='#16335f'/>
        </g>
    ),
    thick: (
        <g>
            <polygon points='8,4 28,2 30,26 16,31 2,25' fill='#3f74b4' stroke='#16335f'/>
            <polygon points='12,7 25,5 26,22 12,24' fill='#d5141e' stroke='#5e0006'/>
            <polygon points='16,22 26,22 16,27 7,24 12,23' fill='#ef2731' stroke='#5e0006'/>
        </g>
    ),
    boolean: (
        <g stroke='#16335f'>
            <circle cx='21' cy='12' r='10' fill='#5f8fca'/>
            <circle cx='12' cy='20' r='10' fill='#3f74b4'/>
        </g>
    ),
    m1: tape(),
    m2: tape(
        <g fill='none'>
            <path d='M2 4 10 28 28 18' stroke='#c9131c' strokeWidth='2.2'/>
            <path d='M8 8C14 0 26 4 23 15' stroke='#2f66a8' strokeWidth='2.4'/>
        </g>
    ),
    m3: tape(
        <path d='M17 9C19 2 30 3 29 10M30 14C29 22 19 21 17 16' fill='none' stroke='#3f74b4' strokeWidth='2.8'/>
    ),
    m4: tape(
        <g stroke='#c9131c' strokeWidth='3'>
            <line x1='3' y1='19' x2='15' y2='31'/>
            <line x1='15' y1='19' x2='3' y2='31'/>
        </g>
    ),
    m5: tape(
        <g fill='none' strokeWidth='2.2'>
            <path d='M2 28V4H30V28' stroke='#5cae17'/>
            <path d='M16 1 28 12 16 29M16 1 3 14 12 26' stroke='#c9131c'/>
        </g>
    ),
    m6: tape(
        <path d='M16 1 29 14 17 29M16 1 3 14 11 26' fill='none' stroke='#c9131c' strokeWidth='2.2'/>
    ),
    m7: tape(
        <path d='M2 29V4H30V29M27 4V27' fill='none' stroke='#5cae17' strokeWidth='2.2'/>
    ),
};

const Icon = ({name, size = 30}) => (
    <Glyph $s={size} viewBox='0 0 32 32'>{icons[name]}</Glyph>
);

const Tool = ({name, active}) => (
    <ToolBtn $active={active}><Icon name={name}/></ToolBtn>
);

const Tools = ({names, sep}) => names.map((n, i) => {
    if (n === '|') return <ToolSep key={i} $w={sep}/>;
    if (n === 'v') return <Drop key={i}/>;
    if (n === 'w') return <Drop key={i} $color='#8b8b8b'/>;
    return <Tool key={i} name={n}/>;
});

const Chev = ({open, color = '#555'}) => (
    <Glyph $s={10} viewBox='0 0 10 10'>
        <path d={open ? 'M1 3 5 7 9 3' : 'M3 1 7 5 3 9'} fill='none' stroke={color} strokeWidth='1.3'/>
    </Glyph>
);

const DocIcon = () => <Icon name='logo' size={20}/>;

const MENUS = [
    ['파일(', 'F', ')'],
    ['편집(', 'E', ')'],
    ['보기(', 'V', ')'],
    ['도구(', 'T', ')'],
    ['매크로(', 'M', ')'],
    ['', 'S', 'ketch'],
    ['', 'P', 'art Design'],
    ['측정'],
    ['창(', 'W', ')'],
    ['도움말(', 'H', ')'],
];

const MAG_VIEWS = ['vfront', 'vtop', 'vright', 'vrear', 'vbottom', 'vleft'];

const Tooltip = ({big, x, y}) => (
    <Tip $big={big} $x={x} $y={y}>
        <TipTitle $big={big}>돌출</TipTitle>
        <TipDesc $big={big}>선택된 스케치를 돌출</TipDesc>
        <TipCode $big={big}>(PartDesign_Pad)</TipCode>
    </Tip>
);

const App = () => {
    return (
        <Page>
            <GlobalStyle/>
            <TitleBar>
                <Icon name='logo' size={20}/>
                <TitleText>FreeCAD 0.20</TitleText>
                <WinBtn>
                    <Glyph $s={14} viewBox='0 0 14 14'><path d='M1 7H13' stroke='#111' strokeWidth='1.2'/></Glyph>
                </WinBtn>
                <WinBtn>
                    <Glyph $s={14} viewBox='0 0 14 14'>
                        <path d='M1.5 4H10V13H1.5ZM4 4V1.5H12.5V10H10' fill='none' stroke='#111' strokeWidth='1.2'/>
                    </Glyph>
                </WinBtn>
                <WinBtn>
                    <Glyph $s={14} viewBox='0 0 14 14'><path d='M1 1 13 13M13 1 1 13' stroke='#111' strokeWidth='1'/></Glyph>
                </WinBtn>
            </TitleBar>
            <MenuBar>
                {MENUS.map(([a, b, c], i) => (
                    <MenuItem key={i} $latin={!a && !!b}>{a}{b && <u>{b}</u>}{c}</MenuItem>
                ))}
            </MenuBar>

            <ToolRow>
                <Handle/>
                <Tools sep={6.5} names={['new', 'open', 'save', 'print', '|', 'cut', 'copy', 'paste', '|', 'undo', 'v', 'redo', 'w', '|', 'check', 'v', '|', 'refresh', '|', 'help']}/>
                <ToolBreak>
                    <Handle $after={6}/>
                    <WorkbenchCombo>
                        <Icon name='wbench' size={20}/>
                        <ComboLabel>Part Design</ComboLabel>
                        <Chev open/>
                    </WorkbenchCombo>
                </ToolBreak>
                <ToolBreak>
                    <Handle $after={3}/>
                    <Tools names={['record', 'stop', 'edit', 'play']}/>
                </ToolBreak>
            </ToolRow>
            <ToolRow $h={43}>
                <Handle/>
                <Tools names={['fitall', 'fitsel', 'drawstyle', 'v', 'bound', '|', 'back', 'forward', 'nav', 'v', '|', 'sync', 'v', 'iso', '|', 'vfront', 'vtop', 'vright', '|', 'vrear', 'vbottom', 'vleft', '|', 'ruler']}/>
                <ToolBreak>
                    <Handle $after={8}/>
                    <Tools names={['part', 'folder', 'link', 'link2', 'v']}/>
                </ToolBreak>
            </ToolRow>
            <ToolRow $h={43}>
                <Handle/>
                <Tools names={['body', 'sketch', 'attach', 'clone', '|', 'point', 'line', 'plane', 'lcs', 'binder', 'subshape', 'sheep']}/>
                <ToolBreak>
                    <Handle $after={4}/>
                    <Tool name='pad' active/>
                    <Tools names={['revolve', 'loft', 'pipe', 'helix', 'box', 'v', '|', 'pocket', 'hole', 'groove', 'sloft', 'spipe', 'shelix', 'sbox', 'v', '|', 'mirror', 'linear', 'polar', 'multi', '|', 'fillet', 'chamfer', 'draft', 'thick', '|', 'boolean']}/>
                </ToolBreak>
                <ToolBreak>
                    <Handle $after={5}/>
                    <Tools names={['m1', 'm2', '|', 'm3', 'm4', 'm5', 'm6', 'm7']}/>
                </ToolBreak>
            </ToolRow>

            <Main>
                <LeftDock>
                    <DockTitle>
                        <DockName>콤보 보기</DockName>
                        <DockBtn>
                            <Glyph $s={12} viewBox='0 0 12 12'>
                                <path d='M1 4H8V11H1ZM4 4V1H11V8H8' fill='none' stroke='#333' strokeWidth='1.5'/>
                            </Glyph>
                        </DockBtn>
                        <DockBtn>
                            <Glyph $s={12} viewBox='0 0 12 12'>
                                <path d='M1.5 1.5 10.5 10.5M10.5 1.5 1.5 10.5' stroke='#333' strokeWidth='1.8'/>
                            </Glyph>
                        </DockBtn>
                    </DockTitle>
                    <TabStrip>
                        <Tab $w={62} $active>모델</Tab>
                        <Tab $w={56}>작업</Tab>
                    </TabStrip>
                    <TreePane>
                        <ColHeads>
                            <ColHead $w={159} $pad={9}>레이블 및 특성</ColHead>
                            <ColHead $w={125} $pad={6}>설명</ColHead>
                        </ColHeads>
                        <AppLabel>응용 프로그램</AppLabel>
                        <TreeRow $level={0}>
                            <Chevron><Chev open/></Chevron>
                            <TreeItem $level={0} $bold>
                                <Icon name='doc' size={18}/>
                                Unnamed
                            </TreeItem>
                        </TreeRow>
                        <TreeRow $level={1}>
                            <Chevron><Chev open/></Chevron>
                            <TreeItem $level={1} $selected $bold>
                                <Icon name='body' size={18}/>
                                Body
                            </TreeItem>
                        </TreeRow>
                        <TreeRow $level={2}>
                            <Chevron><Chev color='#aaa'/></Chevron>
                            <TreeItem $level={2} $muted>
                                <Glyph $s={18} viewBox='0 0 32 32'>
                                    <path d='M14 2V18M14 18 30 20M14 18 2 30' fill='none' stroke='#8f8f8f' strokeWidth='3'/>
                                </Glyph>
                                Origin
                            </TreeItem>
                        </TreeRow>
                        <TreeRow $level={2}>
                            <Chevron/>
                            <TreeItem $level={2}>
                                <Glyph $s={20} viewBox='0 0 32 32'>
                                    <rect x='2' y='11' width='15' height='16' fill='none' stroke='#d5141e' strokeWidth='2.4'/>
                                    <circle cx='17' cy='11' r='9' fill='none' stroke='#d5141e' strokeWidth='2.4'/>
                                    <path d='M18 14 23 20 28 14V30L23 24 18 30Z' fill='#f2c80f' stroke='#a88a00' strokeWidth='.7'/>
                                </Glyph>
                                Sketch
                            </TreeItem>
                        </TreeRow>
                    </TreePane>
                    <PropOuter>
                        <PropBox>
                            <PropHead>
                                <PropCol $w={125} $line>속성</PropCol>
                                <PropCol $w={100}>값</PropCol>
                            </PropHead>
                        </PropBox>
                        <BottomTabs>
                            <BottomTab $w={55}>보기</BottomTab>
                            <BottomTab $w={78} $active>데이터</BottomTab>
                        </BottomTabs>
                    </PropOuter>
                </LeftDock>

                <RightArea>
                    <Canvas>
                        <Scene viewBox='398 184 1522 780'>
                            <polygon points='977,282 1506,456 1506,781 977,607' fill='none' stroke='#fff' strokeWidth='1.5'/>
                            <circle cx='977' cy='282' r='2' fill='#fff'/>
                            <circle cx='1506' cy='456' r='2' fill='#fff'/>
                            <circle cx='1506' cy='781' r='2' fill='#fff'/>
                            <circle cx='977' cy='607' r='2' fill='#fff'/>

                            <g fill='#8a8aaf'>
                                <polygon points='1847,191 1858,203 1836,203'/>
                                <polygon points='1847,323 1858,311 1836,311'/>
                                <polygon points='1781,257 1793,246 1793,268'/>
                                <polygon points='1913,257 1901,246 1901,268'/>
                                <circle cx='1907' cy='197' r='6'/>
                                <polygon points='1798,226 1812,214 1816,222'/>
                                <polygon points='1896,226 1882,214 1878,222'/>
                                <polygon points='1870,302 1880,298 1890,302 1890,314 1880,319 1870,314' fill='#87879f'/>
                            </g>
                            <path d='M1808 216C1814 208 1821 203 1829 200M1886 216C1880 208 1873 203 1865 200' fill='none' stroke='#8a8aaf' strokeWidth='9'/>
                            <polygon points='1892,305 1908,305 1900,313' fill='#3e3d63'/>
                            <g stroke='#2b2b3a' strokeLinejoin='round' strokeWidth='1' fill='#b9bad2'>
                                <polygon points='1841,222 1880,230 1855,248 1815,235'/>
                                <polygon points='1811,245 1853,259 1851,297 1815,285'/>
                                <polygon points='1880,237 1862,258 1862,295 1872,278'/>
                                <polygon points='1815,235 1811,245 1853,259 1855,248'/>
                                <polygon points='1855,248 1880,230 1880,237 1862,258 1853,259'/>
                                <polygon points='1853,259 1862,258 1862,295 1851,297'/>
                            </g>
                            <line x1='1809' y1='285' x2='1802' y2='252' stroke='#1010e0' strokeWidth='2'/>
                            <line x1='1809' y1='285' x2='1843' y2='302' stroke='#e01010' strokeWidth='2'/>
                            <line x1='1809' y1='285' x2='1833' y2='263' stroke='#78e878' strokeWidth='1'/>
                            <text x='1820' y='275' fontSize='13' fill='#444' fontFamily='"Liberation Serif", serif' transform='rotate(14 1832 271)'>FRONT</text>
                            <text x='1841' y='236' fontSize='8' fill='#555' fontFamily='"Liberation Serif", serif' transform='rotate(14 1848 233)'>TOP</text>

                            <line x1='1881' y1='925' x2='1881' y2='905' stroke='#2a2a8e' strokeWidth='2.4'/>
                            <polygon points='1881,899 1884,908 1878,908' fill='#2a2a8e'/>
                            <line x1='1881' y1='925' x2='1889' y2='917' stroke='#1f7f2a' strokeWidth='1.6'/>
                            <polygon points='1893,913 1891,920 1885,915' fill='#1f7f2a'/>
                            <line x1='1881' y1='925' x2='1900' y2='931' stroke='#8a1f2a' strokeWidth='1.6'/>
                            <polygon points='1907,933 1897,934 1899,927' fill='#8a1f2a'/>
                            <g fontSize='9' fontWeight='700' fill='#111' fontFamily='"Liberation Sans", sans-serif'>
                                <text x='1881' y='898'>Z</text>
                                <text x='1893' y='913'>Y</text>
                                <text x='1908' y='933'>X</text>
                            </g>
                        </Scene>
                    </Canvas>
                    <DocTabs>
                        <DocTab $w={155}>
                            <DocIcon/>
                            시작 페이지
                            <CloseBox $ml={3}>✕</CloseBox>
                        </DocTab>
                        <DocTab $w={180} $active>
                            <DocIcon/>
                            Unnamed : 1*
                            <CloseBox $hot $ml={1}>✕</CloseBox>
                        </DocTab>
                    </DocTabs>
                </RightArea>
            </Main>

            <StatusBar>
                <StatusMsg>선택된 스케치를 돌출</StatusMsg>
                <StatusCell>
                    <Glyph $s={14} viewBox='0 0 14 14'>
                        <rect x='2.5' y='.8' width='9' height='12.4' rx='4' fill='none' stroke='#333' strokeWidth='1.3'/>
                        <line x1='7' y1='3' x2='7' y2='6' stroke='#333'/>
                    </Glyph>
                    CAD
                    <Drop/>
                </StatusCell>
                <StatusData>195,13 mm x 100,00 mm</StatusData>
            </StatusBar>

            <ConnectLines viewBox='0 0 1920 1030'>
                <line x1='434' y1='302' x2='487' y2='724' stroke='#000' strokeWidth='5'/>
                <line x1='698' y1='135' x2='942' y2='418' stroke='#000' strokeWidth='5'/>
            </ConnectLines>
            <SmallCallout/>
            <Tooltip x={484} y={191}/>
            <BigCallout>
                <MagStrip>
                    {MAG_VIEWS.slice(0, 3).map((n, i) => (
                        <MagCrop key={n} $first={i === 0}><Icon name={n} size={52}/></MagCrop>
                    ))}
                    <MagGap/>
                    {MAG_VIEWS.slice(3).map(n => (
                        <MagCrop key={n}><Icon name={n} size={52}/></MagCrop>
                    ))}
                </MagStrip>
                <MagRow>
                    <MagSide><Icon name='sheep' size={52}/></MagSide>
                    <MagBtn $active><Icon name='pad' size={52}/></MagBtn>
                    <MagBtn><Icon name='revolve' size={52}/></MagBtn>
                    <MagBtn><Icon name='loft' size={52}/></MagBtn>
                    <MagBtn><Icon name='pipe' size={52}/></MagBtn>
                    <MagBtn><Icon name='helix' size={52}/></MagBtn>
                    <MagBtn><Icon name='box' size={52}/></MagBtn>
                </MagRow>
                <OrangeRing/>
                <MouseWire/>
                <MouseBody>
                    <MouseKeys>
                        <MouseKey $on/>
                        <MouseKey/>
                    </MouseKeys>
                    <MouseLabel>x 1</MouseLabel>
                </MouseBody>
                <Tooltip big x={84} y={108}/>
            </BigCallout>
        </Page>
    );
};

export default App;
